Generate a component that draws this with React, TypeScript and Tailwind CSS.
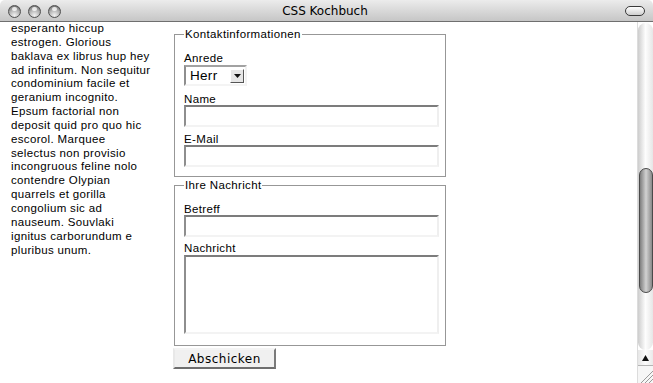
import React from 'react';

const BODY_LINES = [
  'esperanto hiccup',
  'estrogen. Glorious',
  'baklava ex librus hup hey',
  'ad infinitum. Non sequitur',
  'condominium facile et',
  'geranium incognito.',
  'Epsum factorial non',
  'deposit quid pro quo hic',
  'escorol. Marquee',
  'selectus non provisio',
  'incongruous feline nolo',
  'contendre Olypian',
  'quarrels et gorilla',
  'congolium sic ad',
  'nauseum. Souvlaki',
  'ignitus carborundum e',
  'pluribus unum.',
];

const labelClass = 'block h-[12px] text-[11.5px] leading-[12px] tracking-[0.35px] text-black';
const fieldClass =
  'block h-[22px] w-[255px] border-2 border-t-[#7c7c7c] border-l-[#8e8e8e] border-r-[#efefef] border-b-[#f3f3f3] bg-white outline-none';

// Graphite window button
function TrafficLight() {
  return (
    <span className="relative block h-[13px] w-[13px] rounded-full border border-[#505050] bg-[radial-gradient(circle_at_50%_85%,#f2f2f2_0%,#b4b4b4_50%,#5c5c5c_100%)]">
      <span className="absolute left-[3px] top-[1px] h-[4px] w-[5px] rounded-full bg-white/75" />
    </span>
  );
}

function TitleBar() {
  return (
    <div className="grid h-[22px] shrink-0 grid-cols-[1fr_auto_1fr] items-center rounded-t-[5px] border-b border-[#6f6f6f] bg-linear-to-b from-[#ececec] to-[#c6c6c6]">
      <div className="flex gap-[7px] pl-[8px]">
        <TrafficLight />
        <TrafficLight />
        <TrafficLight />
      </div>
      <div className="pr-[3px] font-['DejaVu_Sans',sans-serif] text-[12px] leading-[22px] text-black">CSS Kochbuch</div>
      <div className="flex justify-end pr-[8px]">
        <span className="block h-[10px] w-[20px] rounded-full border border-[#3a3a3a] bg-linear-to-b from-[#ffffff] to-[#cfcfcf]" />
      </div>
    </div>
  );
}

function Scrollbar() {
  return (
    <div className="flex w-[16px] shrink-0 flex-col border-l border-[#dcdcdc] bg-white">
      <div className="mt-[1px] flex h-[327px] w-[15px] flex-col rounded-full bg-linear-to-r from-[#cdcdcd] via-[#fdfdfd] to-[#e6e6e6]">
        <div className="ml-[0.5px] mt-[145px] h-[125px] w-[14px] rounded-full border border-[#4a4a4a] bg-linear-to-r from-[#7e7e7e] via-[#d2d2d2] to-[#8a8a8a]" />
      </div>
      <div className="flex h-[16px] items-center justify-center border-b border-[#b4b4b4] bg-linear-to-r from-[#e6e6e6] via-[#fcfcfc] to-[#eaeaea]">
        <svg width="7" height="6" viewBox="0 0 7 6">
          <polygon points="3.5,0 7,6 0,6" fill="#111" />
        </svg>
      </div>
      <div className="flex flex-1 items-end justify-end bg-[#f6f6f6]">
        <svg width="15" height="15" viewBox="0 0 15 15">
          <line x1="3" y1="15" x2="15" y2="3" stroke="#9a9a9a" strokeWidth="1" />
          <line x1="7" y1="15" x2="15" y2="7" stroke="#9a9a9a" strokeWidth="1" />
          <line x1="11" y1="15" x2="15" y2="11" stroke="#9a9a9a" strokeWidth="1" />
        </svg>
      </div>
    </div>
  );
}

function AnredeSelect() {
  return (
    <div className="mt-[1px] flex h-[21px] w-[63px] items-center border-2 border-t-[#a2a2a2] border-l-[#8e8e8e] border-r-[#f2f2f2] border-b-[#f4f4f4] bg-white">
      <span className="flex-1 pl-[4px] text-[13.5px] leading-[17px] tracking-[0.3px] text-black">Herr</span>
      <span className="mr-[1px] flex h-[14px] w-[14px] items-center justify-center border border-t-[#ffffff] border-l-[#ffffff] border-r-[#555555] border-b-[#555555] bg-[#e6e6e6]">
        <svg width="7" height="4" viewBox="0 0 7 4">
          <polygon points="0,0 7,0 3.5,4" fill="#111" />
        </svg>
      </span>
    </div>
  );
}

export default function App() {
  return (
    <div className="flex h-[383px] w-[653px] flex-col overflow-hidden bg-white font-['Liberation_Sans',Arial,sans-serif]">
      <TitleBar />
      <div className="flex min-h-0 flex-1">
        <main className="flex flex-1">
          <div className="w-[174px] shrink-0 pl-[11px] text-[11.5px] leading-[13.85px] tracking-[0.35px] text-black">
            {BODY_LINES.map((line) => (
              <div key={line} className="whitespace-nowrap">
                {line}
              </div>
            ))}
          </div>

          <form className="mt-[6px] w-[272px] shrink-0">
            <fieldset className="border border-[#979797] pb-[9px] pl-[9px] pr-[6px] pt-[11px]">
              <legend className="px-[1px] text-[11.5px] leading-[13px] tracking-[0.35px] text-black">Kontaktinformationen</legend>
              <label className={labelClass}>Anrede</label>
              <AnredeSelect />
              <label className={`${labelClass} mt-[7px]`}>Name</label>
              <input type="text" className={fieldClass} />
              <label className={`${labelClass} mt-[6px]`}>E-Mail</label>
              <input type="text" className={fieldClass} />
            </fieldset>

            <fieldset className="mt-[2px] border border-[#979797] pb-[11px] pl-[9px] pr-[6px] pt-[11px]">
              <legend className="px-[1px] text-[11.5px] leading-[13px] tracking-[0.35px] text-black">Ihre Nachricht</legend>
              <label className={labelClass}>Betreff</label>
              <input type="text" className={fieldClass} />
              <label className={`${labelClass} mt-[5px]`}>Nachricht</label>
              <textarea className="mt-[1px] block h-[79px] w-[255px] resize-none border-2 border-t-[#7c7c7c] border-l-[#8e8e8e] border-r-[#efefef] border-b-[#f3f3f3] bg-white outline-none" />
            </fieldset>

            <button
              type="button"
              className="ml-[-1px] mt-[2px] block h-[21px] w-[103px] border-2 border-t-[#f4f4f4] border-l-[#e8e8e8] border-r-[#7a7a7a] border-b-[#6e6e6e] bg-[#f0f0f0] font-['DejaVu_Sans',sans-serif] text-[12px] leading-[16px] tracking-[0.5px] text-black"
            >
              Abschicken
            </button>
          </form>
        </main>
        <Scrollbar />
      </div>
    </div>
  );
}
